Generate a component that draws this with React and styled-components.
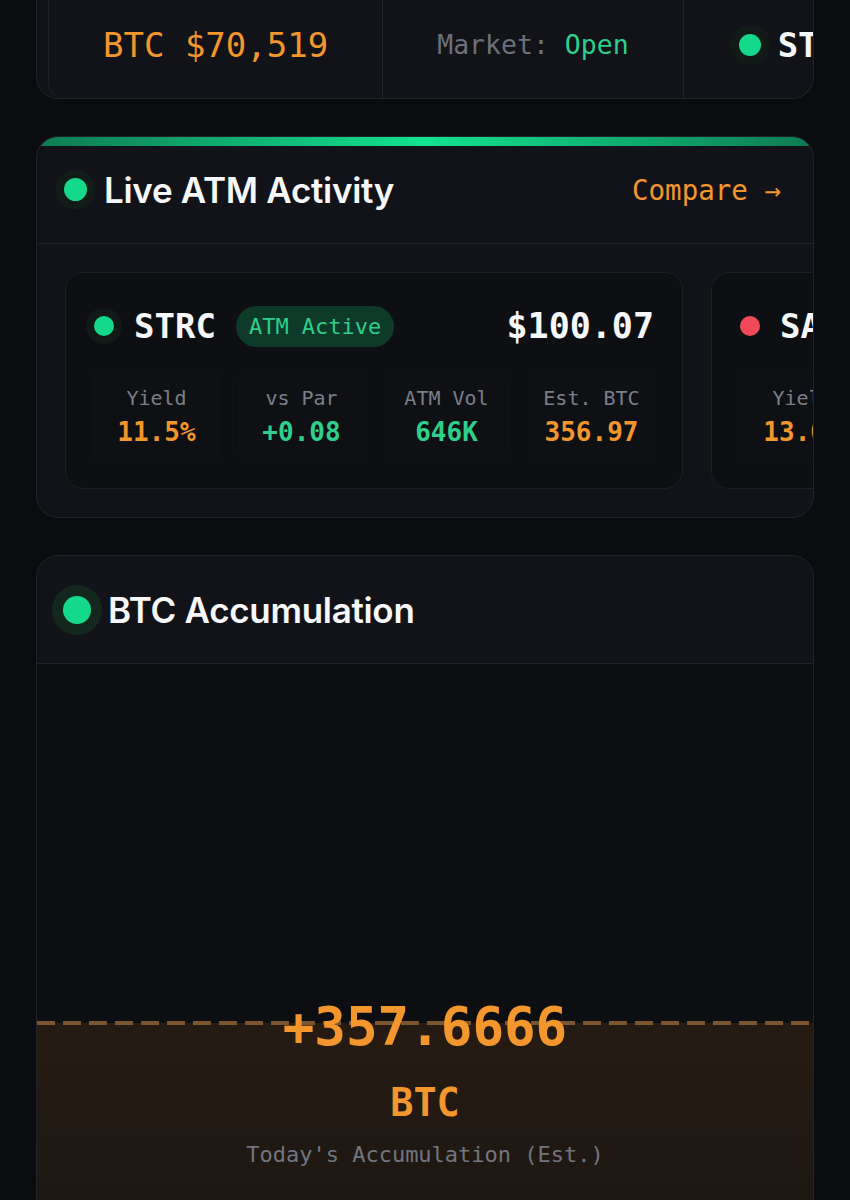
import React from 'react';
import styled, { createGlobalStyle } from 'styled-components';

const mono = `"DejaVu Sans Mono", "Liberation Mono", monospace`;
const sans = `Inter, "Noto Sans", sans-serif`;

const orange = '#f2962d';
const green = '#2fcf8b';
const dotGreen = '#14d98a';
const line = '#212329';

const GlobalStyle = createGlobalStyle`
  body {
    margin: 0;
    background: #0b0c10;
    font-family: ${sans};
    color: #f4f5f7;
  }
`;

const Page = styled.div`
  padding: 0 36px;
  display: flex;
  flex-direction: column;
  gap: 37px;
`;

// ticker strip
const TickerCard = styled.section`
  height: 99px;
  box-sizing: border-box;
  background: #121318;
  border: 1px solid ${line};
  border-top: none;
  border-radius: 0 0 22px 22px;
  overflow: hidden;
  display: flex;
  padding-left: 11px;
`;

const Track = styled.div`
  display: flex;
  border-left: 1px solid ${line};
  border-bottom-left-radius: 16px;
`;

const TickerCell = styled.div`
  flex: 0 0 auto;
  display: flex;
  align-items: center;
  gap: 8px;
  padding: 0 ${p => p.$pad || 54}px 9px;
  border-right: 1px solid ${line};
  font-family: ${mono};
  white-space: pre;
`;

const TickerText = styled.span`
  font-size: ${p => p.$size}px;
  font-weight: ${p => (p.$bold ? 700 : 400)};
  color: ${p => p.$color};
`;

const Dot = styled.span`
  flex: 0 0 auto;
  width: ${p => p.$size}px;
  height: ${p => p.$size}px;
  border-radius: 50%;
  background: ${p => p.$color || dotGreen};
  margin: ${p => p.$ring || 0}px;
  box-shadow: 0 0 0 ${p => p.$ring || 0}px ${p => p.$halo || 'transparent'};
`;

// panels
const Panel = styled.section`
  background: #121318;
  border: 1px solid ${line};
  border-radius: 22px;
  overflow: hidden;
`;

const GlowBar = styled.div`
  height: 9px;
  background: linear-gradient(90deg, #0e7a52 0%, #12e38f 50%, #0e7a52 100%);
`;

const PanelHead = styled.header`
  height: ${p => p.$h}px;
  box-sizing: border-box;
  display: flex;
  align-items: center;
  gap: ${p => p.$gap}px;
  padding: 0 32px ${p => p.$lift || 0}px ${p => p.$left}px;
  border-bottom: 1px solid ${line};
`;

const PanelTitle = styled.h2`
  margin: 0;
  font-family: ${sans};
  font-size: 35px;
  font-weight: 600;
  letter-spacing: -0.3px;
  color: #f6f7f9;
  flex: 1;
`;

const HeadLink = styled.a`
  font-family: ${mono};
  font-size: 27.5px;
  color: ${orange};
  text-decoration: none;
`;

const Carousel = styled.div`
  display: flex;
  gap: 28px;
  padding: 28px;
  overflow: hidden;
`;

const Instrument = styled.article`
  flex: 0 0 618px;
  box-sizing: border-box;
  height: 217px;
  background: #0e0f13;
  border: 1px solid #1d1f25;
  border-radius: 18px;
  padding: 32px 20px 0;
  display: flex;
  flex-direction: column;
  gap: 21px;
`;

const InstrumentHead = styled.div`
  display: flex;
  align-items: center;
  height: 42px;
  padding-right: 8px;
  font-family: ${mono};
  white-space: nowrap;
`;

const Symbol = styled.span`
  font-size: 34px;
  font-weight: 700;
  color: #f6f7f9;
  margin-left: 12px;
`;

const Badge = styled.span`
  margin-left: 20px;
  padding: 6px 13px;
  border-radius: 999px;
  background: #0e3a29;
  color: ${green};
  font-size: 22px;
  line-height: 29px;
`;

const Price = styled.span`
  margin-left: auto;
  font-size: 35px;
  font-weight: 700;
  color: #f6f7f9;
`;

const Stats = styled.div`
  display: grid;
  grid-template-columns: repeat(4, 1fr);
  gap: 20px;
  margin: 0 8px;
`;

const Stat = styled.div`
  display: flex;
  flex-direction: column;
  align-items: center;
  gap: 6px;
  padding: 16px 0;
  border-radius: 12px;
  background: rgba(255, 255, 255, 0.006);
  border: 1px solid rgba(255, 255, 255, 0.01);
  font-family: ${mono};
  white-space: nowrap;
`;

const StatLabel = styled.span`
  font-size: 20px;
  line-height: 26px;
  color: #7b7f89;
`;

const StatValue = styled.span`
  font-size: 26px;
  line-height: 30px;
  font-weight: 700;
  color: ${p => p.$color};
`;

// accumulation chart
const ChartBody = styled.div`
  position: relative;
  height: 560px;
  background: #0d0e12;
  display: flex;
  flex-direction: column;
  align-items: center;
  padding-top: 333px;
  box-sizing: border-box;
  font-family: ${mono};
`;

const ChartArt = styled.svg`
  position: absolute;
  inset: 0;
  width: 100%;
  height: 100%;
`;

const Amount = styled.div`
  position: relative;
  font-size: 52.5px;
  line-height: 60px;
  font-weight: 700;
  color: ${orange};
`;

const Unit = styled.div`
  position: relative;
  margin-top: 24px;
  font-size: 38.5px;
  line-height: 44px;
  font-weight: 700;
  color: ${orange};
`;

const Caption = styled.div`
  position: relative;
  margin-top: 16px;
  font-size: 22px;
  line-height: 28px;
  color: #72757e;
`;

const instruments = [
  {
    symbol: 'STRC',
    live: true,
    price: '$100.07',
    stats: [
      ['Yield', '11.5%', orange],
      ['vs Par', '+0.08', green],
      ['ATM Vol', '646K', green],
      ['Est. BTC', '356.97', orange],
    ],
  },
  {
    symbol: 'SATA',
    live: false,
    price: '$99.12',
    stats: [
      ['Yield', '13.0%', orange],
      ['vs Par', '-0.88', '#f04a5a'],
      ['ATM Vol', '0', '#7b7f89'],
      ['Est. BTC', '0.70', orange],
    ],
  },
];

const InstrumentCard = ({ item }) => (
  <Instrument>
    <InstrumentHead>
      <Dot
        $size={20}
        $ring={8}
        $color={item.live ? dotGreen : '#f04a5a'}
        $halo={item.live ? '#111a17' : 'transparent'}
      />
      <Symbol>{item.symbol}</Symbol>
      {item.live && <Badge>ATM Active</Badge>}
      <Price>{item.price}</Price>
    </InstrumentHead>
    <Stats>
      {item.stats.map(([label, value, color]) => (
        <Stat key={label}>
          <StatLabel>{label}</StatLabel>
          <StatValue $color={color}>{value}</StatValue>
        </Stat>
      ))}
    </Stats>
  </Instrument>
);

const App = () => (
  <>
    <GlobalStyle />
    <Page>
      <TickerCard>
        <Track>
          <TickerCell>
            <TickerText $size={34} $color={orange}>BTC $70,519</TickerText>
          </TickerCell>
          <TickerCell>
            <TickerText $size={26.5} $color="#6c707a">
              Market: <TickerText $size={26.5} $color={green}>Open</TickerText>
            </TickerText>
          </TickerCell>
          <TickerCell $pad={46}>
            <Dot $size={22} $ring={9} $halo="#111a17" />
            <TickerText $size={34} $bold $color="#f6f7f9">STRC $100.07</TickerText>
          </TickerCell>
        </Track>
      </TickerCard>

      <Panel>
        <GlowBar />
        <PanelHead $h={98} $left={18} $gap={9} $lift={10}>
          <Dot $size={23} $ring={8.5} $halo="#111b17" />
          <PanelTitle>Live ATM Activity</PanelTitle>
          <HeadLink>Compare →</HeadLink>
        </PanelHead>
        <Carousel>
          {instruments.map(item => (
            <InstrumentCard key={item.symbol} item={item} />
          ))}
        </Carousel>
      </Panel>

      <Panel>
        <PanelHead $h={108} $left={15} $gap={6}>
          <Dot $size={28} $ring={11} $halo="#13271f" />
          <PanelTitle>BTC Accumulation</PanelTitle>
        </PanelHead>
        <ChartBody>
          <ChartArt>
            <defs>
              <linearGradient id="accFill" x1="0" y1="0" x2="0" y2="1">
                <stop offset="0" stopColor="#261b12" />
                <stop offset="1" stopColor="#1b1613" />
              </linearGradient>
            </defs>
            <rect x="0" y="359" width="100%" height="220" fill="url(#accFill)" />
            <line
              x1="0"
              x2="100%"
              y1="359"
              y2="359"
              stroke="#7a5530"
              strokeWidth="4"
              strokeDasharray="18 8"
            />
          </ChartArt>
          <Amount>+357.6666</Amount>
          <Unit>BTC</Unit>
          <Caption>Today's Accumulation (Est.)</Caption>
        </ChartBody>
      </Panel>
    </Page>
  </>
);

export default App;
